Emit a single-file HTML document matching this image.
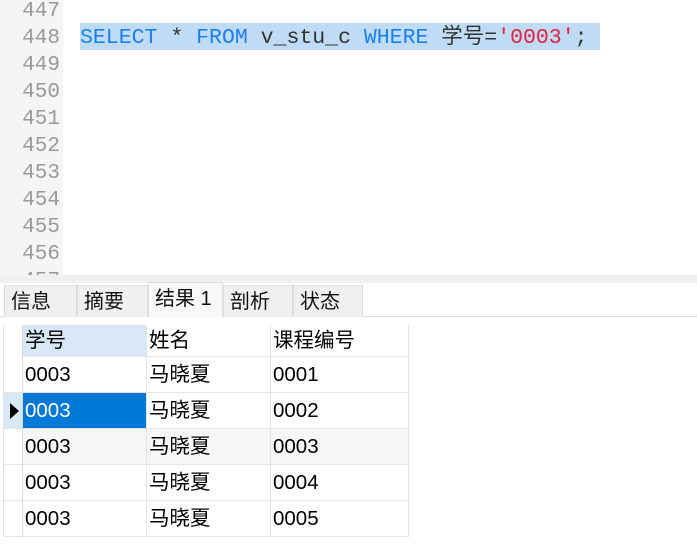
<!DOCTYPE html><html><head><meta charset="utf-8"><style>
body{margin:0;width:697px;height:550px;position:relative;background:#fff;overflow:hidden;font-family:"Liberation Sans","Noto Sans CJK SC",sans-serif}
.a{position:absolute}
.ln{position:absolute;left:0;width:60px;text-align:right;font:21px "Liberation Mono",monospace;color:#999;}
.code{font:21.5px "Liberation Mono","Noto Sans CJK SC",monospace;white-space:pre}
.tab{position:absolute;top:285px;height:32px;background:#f0f0f0;border:1px solid #ddd;border-bottom:none;font-size:20px;line-height:32px;padding-left:6px;box-sizing:border-box;color:#111}
.c{position:absolute;font-size:20.5px;line-height:36px;color:#000;padding-left:2px;box-sizing:border-box;border-right:1px solid #e4e4e4;border-bottom:1px solid #e4e4e4;height:36px}
</style></head><body>
<div class="a" style="left:0;top:0;width:63px;height:275px;background:#f5f5f5"></div>
<div class="ln" style="top:0px">447</div>
<div class="ln" style="top:27px">448</div>
<div class="ln" style="top:54px">449</div>
<div class="ln" style="top:81px">450</div>
<div class="ln" style="top:108px">451</div>
<div class="ln" style="top:135px">452</div>
<div class="ln" style="top:162px">453</div>
<div class="ln" style="top:189px">454</div>
<div class="ln" style="top:216px">455</div>
<div class="ln" style="top:243px">456</div>
<div class="ln" style="top:270px">457</div>
<div class="a" style="left:80px;top:23px;width:520px;height:27px;background:#c0dbf5"></div>
<div class="a code" style="left:80px;top:25px;line-height:26px;color:#333"><span style="color:#1a7ff0">SELECT</span> * <span style="color:#1a7ff0">FROM</span> v_stu_c <span style="color:#1a7ff0">WHERE</span> 学号=<span style="color:#e8203a">'0003'</span>;</div>
<div class="a" style="left:0;top:275px;width:697px;height:8px;background:#f0f0f0"></div>
<div class="a" style="left:0;top:283px;width:697px;height:34px;background:#fff"></div>
<div class="a" style="left:0;top:316px;width:697px;height:1px;background:#ddd"></div>
<div class="tab" style="left:4px;width:73px">信息</div>
<div class="tab" style="left:77px;width:71px">摘要</div>
<div class="tab" style="left:148px;width:75px;top:282px;height:35px;background:#f8f8f8;line-height:32px">结果 1</div>
<div class="tab" style="left:223px;width:70px">剖析</div>
<div class="tab" style="left:293px;width:70px">状态</div>
<div class="a" style="left:3px;top:325px;width:1px;height:212px;background:#e4e4e4"></div>
<div class="a" style="left:4px;top:536px;width:404px;height:1px;background:#e4e4e4"></div>
<div class="a" style="left:4px;top:393px;width:18px;height:36px;background:#d8e8f6"></div>
<div class="a" style="left:10px;top:403px;width:0;height:0;border-left:9px solid #000;border-top:8px solid transparent;border-bottom:8px solid transparent"></div>
<div class="a" style="left:22px;top:325px;width:1px;height:212px;background:#d8d8d8"></div>
<div class="c" style="left:23px;top:325px;width:124px;height:32px;line-height:32px;background:#d8e8f6">学号</div>
<div class="c" style="left:147px;top:325px;width:124px;height:32px;line-height:32px">姓名</div>
<div class="c" style="left:271px;top:325px;width:138px;height:32px;line-height:32px">课程编号</div>
<div class="c" style="left:23px;top:357px;width:124px">0003</div><div class="c" style="left:147px;top:357px;width:124px">马晓夏</div><div class="c" style="left:271px;top:357px;width:138px">0001</div>
<div class="c" style="left:23px;top:393px;width:124px;background:#0078d7;color:#fff">0003</div><div class="c" style="left:147px;top:393px;width:124px">马晓夏</div><div class="c" style="left:271px;top:393px;width:138px">0002</div>
<div class="c" style="left:23px;top:429px;width:124px;background:#f7f7f7">0003</div><div class="c" style="left:147px;top:429px;width:124px;background:#f7f7f7">马晓夏</div><div class="c" style="left:271px;top:429px;width:138px;background:#f7f7f7">0003</div>
<div class="c" style="left:23px;top:465px;width:124px">0003</div><div class="c" style="left:147px;top:465px;width:124px">马晓夏</div><div class="c" style="left:271px;top:465px;width:138px">0004</div>
<div class="c" style="left:23px;top:501px;width:124px">0003</div><div class="c" style="left:147px;top:501px;width:124px">马晓夏</div><div class="c" style="left:271px;top:501px;width:138px">0005</div>
<div class="a" style="left:4px;top:392px;width:18px;height:1px;background:#e4e4e4"></div>
<div class="a" style="left:4px;top:428px;width:18px;height:1px;background:#e4e4e4"></div>
<div class="a" style="left:4px;top:464px;width:18px;height:1px;background:#e4e4e4"></div>
<div class="a" style="left:4px;top:500px;width:18px;height:1px;background:#e4e4e4"></div>
</body></html>
